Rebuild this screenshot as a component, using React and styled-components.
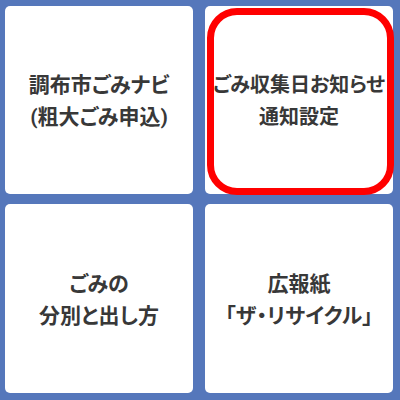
import React from 'react'
import styled, { createGlobalStyle } from 'styled-components'

const GlobalStyle = createGlobalStyle`
  html, body {
    margin: 0;
    padding: 0;
    background: #5577bb;
  }
  body {
    font-family: Roboto, "Noto Sans CJK JP", sans-serif;
  }
`

const items = [
  { id: 1, lines: ['調布市ごみナビ', '(粗大ごみ申込)'] },
  { id: 2, lines: ['ごみ収集日お知らせ', '通知設定'], selected: true, size: 20 },
  { id: 3, lines: ['ごみの', '分別と出し方'] },
  { id: 4, lines: ['広報紙', '「ザ・リサイクル」'] },
]

const App = () => {
  return (
    <>
      <GlobalStyle />
      <Page>
        <Grid>
          {items.map((item) => (
            <Card key={item.id}>
              <Label>
                {item.lines.map((l) => (
                  <Line key={l} $size={item.size || 21}>{l}</Line>
                ))}
              </Label>
              {item.selected && <Highlight />}
            </Card>
          ))}
        </Grid>
      </Page>
    </>
  )
}

export default App

const Page = styled.div`
  width: 400px;
  height: 400px;
  box-sizing: border-box;
  padding: 6px 7px 7px 5px;
  background: #5577bb;
`

const Grid = styled.div`
  display: grid;
  grid-template-columns: 188px 188px;
  grid-template-rows: 188px 189px;
  column-gap: 12px;
  row-gap: 10px;
`

const Card = styled.div`
  position: relative;
  display: flex;
  align-items: center;
  justify-content: center;
  background: #ffffff;
  border-radius: 5px;
`

const Label = styled.div`
  display: flex;
  flex-direction: column;
  align-items: center;
  margin-top: 2px;
`

const Line = styled.div`
  font-family: Roboto, "Noto Sans CJK JP", sans-serif;
  font-size: ${(p) => p.$size}px;
  font-weight: 700;
  line-height: 32px;
  color: #383838;
  white-space: nowrap;
  font-feature-settings: "palt";
`

const Highlight = styled.div`
  position: absolute;
  top: 2px;
  left: 2px;
  right: -1px;
  bottom: -1px;
  border: 7px solid #ff0000;
  border-radius: 30px;
  pointer-events: none;
`
